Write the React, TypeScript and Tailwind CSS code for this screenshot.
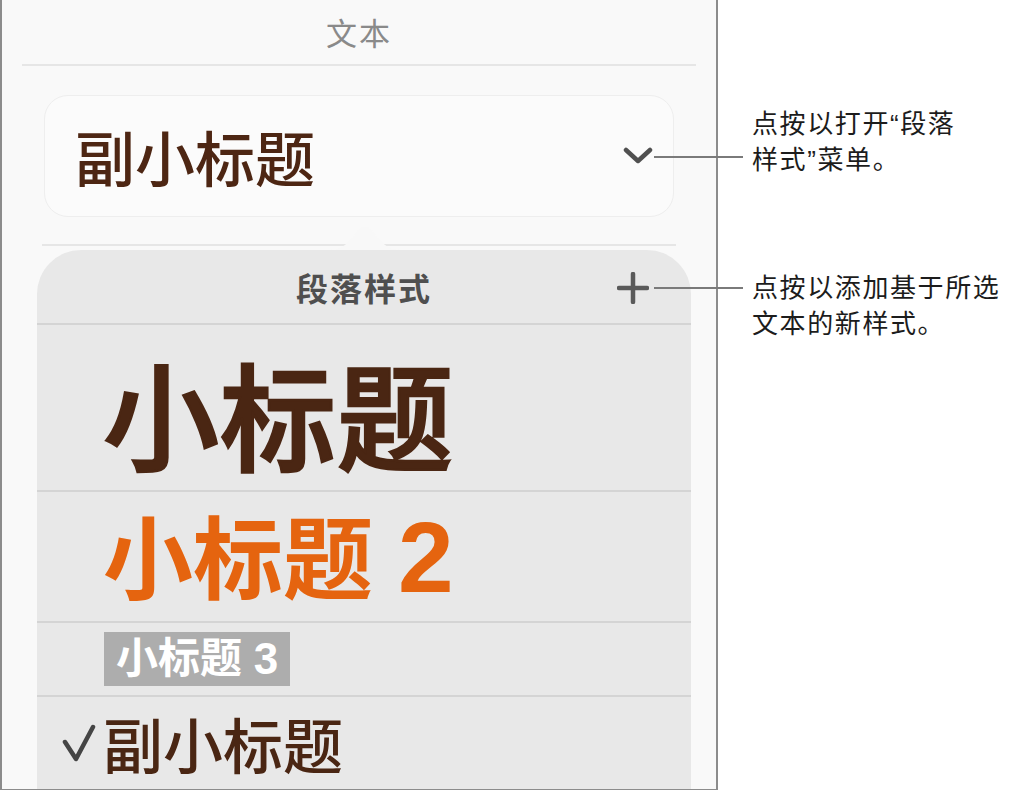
import React from 'react';

const cjk = { fontFamily: '"Noto Sans CJK SC", "Noto Sans", sans-serif' };
const mixed = { fontFamily: '"Liberation Sans", "Noto Sans CJK SC", sans-serif' };

const Chevron = () => (
  <svg width="30" height="18" viewBox="0 0 30 18" fill="none">
    <path d="M3 3 L15 14 L27 3" stroke="#505050" strokeWidth="4.5" strokeLinecap="round" strokeLinejoin="round" />
  </svg>
);

const PlusIcon = () => (
  <svg width="32" height="32" viewBox="0 0 32 32" fill="none">
    <path d="M16 2 V30 M2 16 H30" stroke="#5a5a5a" strokeWidth="4.5" strokeLinecap="round" />
  </svg>
);

const Check = () => (
  <svg width="34" height="38" viewBox="0 0 34 38" fill="none">
    <path d="M3 18 L14 35 L31 3" stroke="#454545" strokeWidth="4.5" strokeLinecap="round" strokeLinejoin="round" />
  </svg>
);

// popover arrow with a soft rounded tip
const Arrow = () => (
  <svg width="72" height="28" viewBox="0 0 72 28">
    <path d="M0 28 C14 28 20 20 28 10 Q36 -1 44 10 C52 20 58 28 72 28 Z" fill="#f8f8f8" />
  </svg>
);

interface CalloutProps {
  lines: string[];
  lineTop: number;
}

const Callout: React.FC<CalloutProps> = ({ lines, lineTop }) => (
  <div className="relative">
    <div
      className="absolute right-full mr-[9px] w-[89px] h-[2px] bg-[#7a7a7a]"
      style={{ top: lineTop }}
    />
    {lines.map((l) => (
      <div key={l} className="text-[26px] leading-[36px] tracking-[1.6px] text-[#1c1c1c]" style={mixed}>
        {l}
      </div>
    ))}
  </div>
);

export default function App() {
  return (
    <div className="w-[1013px] h-[790px] bg-white flex overflow-hidden">
      {/* inspector panel */}
      <div className="w-[718px] h-[790px] shrink-0 border-x-2 border-b border-[#8c8c8c] bg-[#f9f9f9] flex flex-col overflow-hidden" style={cjk}>
        <div className="h-[64px] flex items-center justify-center text-[31px] text-[#8a8a8a] tracking-[2px]">
          文本
        </div>
        <div className="mx-[20px] h-[2px] bg-[#e6e6e6]" />

        <div className="mt-[29px] mx-[42px] h-[122px] rounded-[24px] border border-[#eeeeee] bg-[#fbfbfb] flex items-center justify-between pl-[30px] pr-[20px]">
          <span className="text-[60px] leading-none font-medium text-[#4d2613]">副小标题</span>
          <Chevron />
        </div>

        <div className="mt-[27px] ml-[40px] mr-[40px] h-[2px] bg-[#e6e6e6]" />

        {/* paragraph style popover */}
        <div className="relative mt-[4px] ml-[35px] mr-[25px] flex-1 rounded-t-[44px] bg-[#e8e8e8]">
          <div className="absolute left-[292px] -top-[28px]">
            <Arrow />
          </div>

          <div className="h-[75px] border-b-2 border-[#d4d4d4] grid grid-cols-[1fr_auto_1fr] items-center">
            <div />
            <span className="text-[32px] font-semibold text-[#4f4f4f] tracking-[2px]">段落样式</span>
            <div className="justify-self-end pr-[42px] pt-[2px]">
              <PlusIcon />
            </div>
          </div>

          <div className="h-[167px] border-b-2 border-[#d4d4d4] flex items-center pl-[66px] pt-[6px]">
            <span className="text-[116px] leading-none font-medium text-[#4a2613] tracking-[1px] [-webkit-text-stroke:2.5px_#4a2613]">
              小标题
            </span>
          </div>

          <div className="h-[131px] border-b-2 border-[#d4d4d4] flex items-center pl-[66px]" style={mixed}>
            <span className="text-[90px] leading-none font-bold text-[#e5640f] whitespace-pre">
              小标题 <span className="text-[100px]">2</span>
            </span>
          </div>

          <div className="h-[74px] border-b-2 border-[#d4d4d4] flex items-center pl-[67px]" style={mixed}>
            <span className="h-[54px] flex items-center px-[12px] bg-[#adadad] text-[42px] leading-none font-bold text-white whitespace-pre">
              小标题 <span className="text-[44px]">3</span>
            </span>
          </div>

          <div className="h-[92px] flex items-center pl-[25px] gap-[7px]">
            <Check />
            <span className="text-[60px] leading-none font-medium text-[#4a2613]">副小标题</span>
          </div>
        </div>
      </div>

      {/* annotations */}
      <div className="flex flex-col pl-[34px] pt-[106px] gap-[92px]">
        <Callout lines={['点按以打开“段落', '样式”菜单。']} lineTop={50} />
        <Callout lines={['点按以添加基于所选', '文本的新样式。']} lineTop={17} />
      </div>
    </div>
  );
}
